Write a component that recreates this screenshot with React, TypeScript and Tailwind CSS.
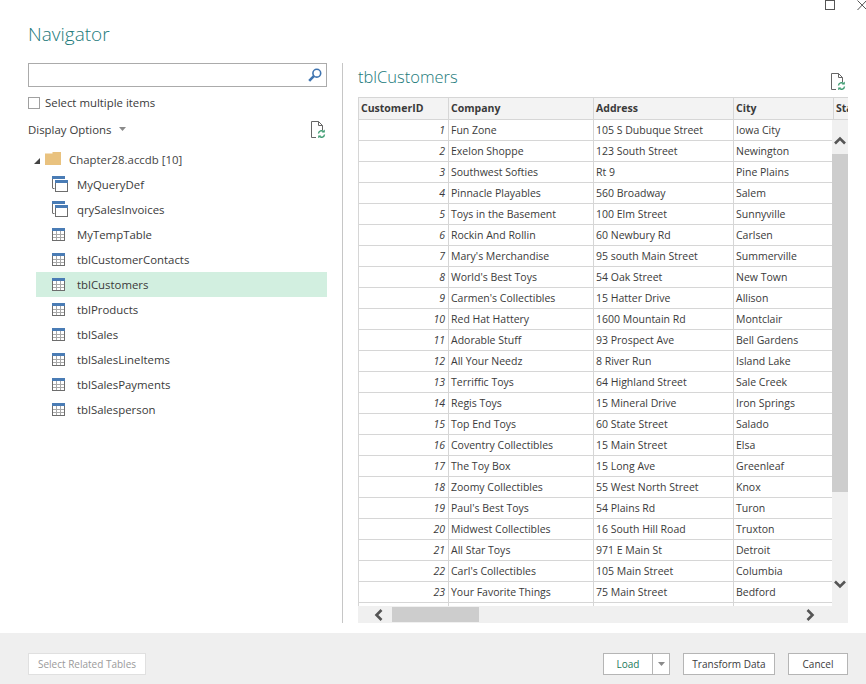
const rows = [
  ["1", "Fun Zone", "105 S Dubuque Street", "Iowa City"],
  ["2", "Exelon Shoppe", "123 South Street", "Newington"],
  ["3", "Southwest Softies", "Rt 9", "Pine Plains"],
  ["4", "Pinnacle Playables", "560 Broadway", "Salem"],
  ["5", "Toys in the Basement", "100 Elm Street", "Sunnyville"],
  ["6", "Rockin And Rollin", "60 Newbury Rd", "Carlsen"],
  ["7", "Mary's Merchandise", "95 south Main Street", "Summerville"],
  ["8", "World's Best Toys", "54 Oak Street", "New Town"],
  ["9", "Carmen's Collectibles", "15 Hatter Drive", "Allison"],
  ["10", "Red Hat Hattery", "1600 Mountain Rd", "Montclair"],
  ["11", "Adorable Stuff", "93 Prospect Ave", "Bell Gardens"],
  ["12", "All Your Needz", "8 River Run", "Island Lake"],
  ["13", "Terriffic Toys", "64 Highland Street", "Sale Creek"],
  ["14", "Regis Toys", "15 Mineral Drive", "Iron Springs"],
  ["15", "Top End Toys", "60 State Street", "Salado"],
  ["16", "Coventry Collectibles", "15 Main Street", "Elsa"],
  ["17", "The Toy Box", "15 Long Ave", "Greenleaf"],
  ["18", "Zoomy Collectibles", "55 West North Street", "Knox"],
  ["19", "Paul's Best Toys", "54 Plains Rd", "Turon"],
  ["20", "Midwest Collectibles", "16 South Hill Road", "Truxton"],
  ["21", "All Star Toys", "971 E Main St", "Detroit"],
  ["22", "Carl's Collectibles", "105 Main Street", "Columbia"],
  ["23", "Your Favorite Things", "75 Main Street", "Bedford"],
];

const items = [
  { name: "MyQueryDef", kind: "query" },
  { name: "qrySalesInvoices", kind: "query" },
  { name: "MyTempTable", kind: "table" },
  { name: "tblCustomerContacts", kind: "table" },
  { name: "tblCustomers", kind: "table", selected: true },
  { name: "tblProducts", kind: "table" },
  { name: "tblSales", kind: "table" },
  { name: "tblSalesLineItems", kind: "table" },
  { name: "tblSalesPayments", kind: "table" },
  { name: "tblSalesperson", kind: "table" },
];

const TableIcon = () => (
  <svg width="14" height="13" viewBox="0 0 14 13" className="shrink-0">
    <rect x="0.5" y="0.5" width="12" height="12" fill="#fff" stroke="#6d6d6d" />
    <rect x="0" y="0" width="13" height="3" fill="#4a7cb5" />
    <path d="M4.5 3v9M8.5 3v9M1 6.5h11M1 9.5h11" stroke="#a9a9a9" fill="none" />
  </svg>
);

const QueryIcon = () => (
  <svg width="17" height="17" viewBox="0 0 17 17" className="shrink-0">
    <path d="M0.5 12V1" stroke="#6d6d6d" fill="none" />
    <rect x="0" y="0" width="13" height="3" fill="#4a7cb5" />
    <path d="M0.5 12.5h2" stroke="#6d6d6d" fill="none" />
    <rect x="3.5" y="4.5" width="12" height="11" fill="#fff" stroke="#6d6d6d" />
    <rect x="3" y="4" width="13" height="3" fill="#4a7cb5" />
  </svg>
);

const RefreshDoc = () => (
  <svg width="15" height="17" viewBox="0 0 15 17">
    <path d="M5 16.5H0.5V0.5H7.5L11.5 4.5V9M7.5 0.5V4.5H11.5" stroke="#666" fill="none" />
    <path d="M7.5 12.5a3 3 0 0 1 5.2-1.8M13.5 13.5a3 3 0 0 1-5.2 1.8" stroke="#3f9c72" strokeWidth="1.4" fill="none" />
    <path d="M13.8 8.6v3h-3zM7.2 17.4v-3h3z" fill="#3f9c72" />
  </svg>
);

const Chevron = ({ d }: { d: string }) => (
  <svg width="12" height="12" viewBox="0 0 12 12" className="shrink-0">
    <path d={d} stroke="#555" strokeWidth="2.6" fill="none" />
  </svg>
);

const Caret = () => (
  <svg width="7" height="4" viewBox="0 0 7 4">
    <path d="M0 0h7L3.5 4z" fill="#8a8a8a" />
  </svg>
);

const App = () => {
  return (
    <div className="flex h-[684px] w-[866px] flex-col overflow-hidden bg-white font-['Open_Sans',sans-serif] text-[11.4px] text-[#3a3a3a]">
      <div className="flex h-[633px] flex-col">
        <div className="flex h-[12px] items-start justify-end gap-[22px]">
          <div className="h-[10px] w-[10px] border border-[#555]" />
          <svg width="9" height="11" viewBox="0 0 9 11" className="shrink-0">
            <path d="M0.5 0.5L10 10M10 0L0.5 10" stroke="#555" fill="none" />
          </svg>
        </div>
        <div className="flex flex-1">
          <div className="w-[342px] shrink-0 pl-[28px]">
            <h1 className="mt-[6px] h-[32px] text-[19px] leading-[32px] font-light text-[#217a7a]">Navigator</h1>
            <div className="mt-[13px] flex h-[24px] w-[299px] items-center justify-end border border-[#ababab] pr-[4px]">
              <svg width="14" height="14" viewBox="0 0 14 14">
                <circle cx="8.8" cy="5.2" r="3.9" stroke="#3f74b0" strokeWidth="1.6" fill="none" />
                <path d="M1.2 12.8L5.8 8.2" stroke="#3f74b0" strokeWidth="2.6" fill="none" />
              </svg>
            </div>
            <div className="mt-[9px] flex h-[14px] items-center gap-[5px]">
              <div className="h-[12px] w-[12px] border border-[#a0a0a0]" />
              <span>Select multiple items</span>
            </div>
            <div className="mt-[10px] flex h-[20px] w-[298px] items-center">
              <span>Display Options</span>
              <span className="mb-[2px] ml-[8px]">
                <Caret />
              </span>
              <span className="mb-[1px] ml-auto">
                <RefreshDoc />
              </span>
            </div>
            <div className="mt-[7px] flex h-[25px] items-center pl-[6px]">
              <svg width="6" height="6" viewBox="0 0 6 6" className="mt-[2px]">
                <path d="M6 0v6H0z" fill="#444" />
              </svg>
              <svg width="16" height="13" viewBox="0 0 16 13" className="mt-[-3px] ml-[5px]">
                <path d="M0 1.5h7.5v-1.5h8.5v13H0z" fill="#e9c27f" />
              </svg>
              <span className="ml-[8px] text-[#444]">Chapter28.accdb [10]</span>
            </div>
            <div className="ml-[8px] w-[291px]">
              {items.map((item) => (
                <div
                  key={item.name}
                  className={
                    item.selected
                      ? "flex h-[25px] items-center bg-[#d2efe0] pl-[16px]"
                      : "flex h-[25px] items-center pl-[16px]"
                  }
                >
                  <div className="flex w-[25px] shrink-0">{item.kind === "query" ? <QueryIcon /> : <TableIcon />}</div>
                  <span>{item.name}</span>
                </div>
              ))}
            </div>
          </div>
          <div className="mt-[51px] mb-[10px] w-px bg-[#c6c6c6]" />
          <div className="ml-[15px] w-[490px] text-[10.5px]">
            <div className="mt-[52px] flex h-[33px] items-start justify-between">
              <h2 className="text-[16.5px] leading-[26px] font-light text-[#217a7a]">tblCustomers</h2>
              <span className="mt-[9px] mr-[2px]">
                <RefreshDoc />
              </span>
            </div>
            <div className="flex h-[23px] w-[490px] overflow-hidden border-y border-[#d6d6d6] bg-[#f3f3f3] font-bold">
              <div className="w-[91px] shrink-0 border-x border-[#d6d6d6] pl-[2px] leading-[21px]">CustomerID</div>
              <div className="w-[145px] shrink-0 border-r border-[#d6d6d6] pl-[2px] leading-[21px]">Company</div>
              <div className="w-[140px] shrink-0 border-r border-[#d6d6d6] pl-[2px] leading-[21px]">Address</div>
              <div className="w-[100px] shrink-0 border-r border-[#d6d6d6] pl-[2px] leading-[21px]">City</div>
              <div className="w-[14px] shrink-0 overflow-hidden pl-[2px] leading-[21px]">Sta</div>
            </div>
            <div className="flex h-[486px]">
              <div className="w-[474px] overflow-hidden">
                {rows.map((r) => (
                  <div key={r[0]} className="flex h-[21px] border-b border-[#d6d6d6] leading-[20px]">
                    <div className="w-[91px] shrink-0 border-x border-[#d6d6d6] pr-[3px] text-right italic">{r[0]}</div>
                    <div className="w-[145px] shrink-0 border-r border-[#d6d6d6] pl-[2px]">{r[1]}</div>
                    <div className="w-[140px] shrink-0 border-r border-[#d6d6d6] pl-[2px]">{r[2]}</div>
                    <div className="w-[98px] shrink-0 pl-[2px]">{r[3]}</div>
                  </div>
                ))}
                <div className="flex h-[3px]">
                  <div className="w-[91px] shrink-0 border-x border-[#d6d6d6]" />
                  <div className="w-[145px] shrink-0 border-r border-[#d6d6d6]" />
                  <div className="w-[140px] shrink-0 border-r border-[#d6d6d6]" />
                </div>
              </div>
              <div className="flex w-[16px] flex-col items-center bg-[#f0f0f0]">
                <div className="flex h-[34px] w-full items-center justify-center pt-[7px]">
                  <Chevron d="M1 8.5L6 3.5L11 8.5" />
                </div>
                <div className="h-[338px] w-full bg-[#cdcdcd]" />
                <div className="mt-[86px]">
                  <Chevron d="M1 3.5L6 8.5L11 3.5" />
                </div>
              </div>
            </div>
            <div className="flex h-[17px] items-center bg-[#f0f0f0]">
              <span className="ml-[15px]">
                <Chevron d="M8.5 1L3.5 6L8.5 11" />
              </span>
              <div className="ml-[7px] h-[15px] w-[87px] bg-[#cdcdcd]" />
              <span className="mr-[32px] ml-auto">
                <Chevron d="M3.5 1L8.5 6L3.5 11" />
              </span>
            </div>
          </div>
        </div>
      </div>
      <div className="flex flex-1 items-start bg-[#efefef] pt-[20px] pr-[18px] pl-[28px] text-[10px]">
        <button className="h-[22px] w-[118px] border border-[#e0e0e0] bg-white text-[#9a9a9a]">
          Select Related Tables
        </button>
        <div className="ml-auto flex h-[22px] w-[67px] border border-[#b5b5b5] bg-white">
          <span className="w-[48px] text-center leading-[20px] text-[#217a5a]">Load</span>
          <span className="flex flex-1 items-center justify-center border-l border-[#b5b5b5]">
            <Caret />
          </span>
        </div>
        <button className="ml-[13px] h-[22px] w-[92px] border border-[#b5b5b5] bg-white">Transform Data</button>
        <button className="ml-[13px] h-[22px] w-[60px] border border-[#b5b5b5] bg-white">Cancel</button>
      </div>
    </div>
  );
};

export default App;
